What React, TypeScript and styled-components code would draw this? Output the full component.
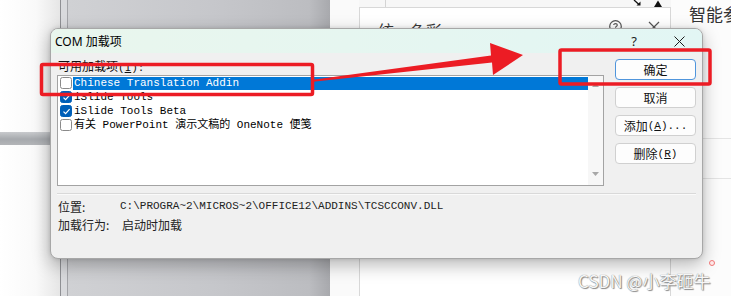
import React from 'react';
import styled, { createGlobalStyle } from 'styled-components';

const MONO = `"Liberation Mono", "Noto Sans CJK SC", monospace`;
const SANS = `"Noto Sans", "Noto Sans CJK SC", sans-serif`;
const CJK = `"Noto Sans CJK SC", "Noto Sans", sans-serif`;

const GlobalStyle = createGlobalStyle`
  html, body { margin: 0; padding: 0; background: #fff; }
  body { font-family: ${SANS}; }
`;

type Addin = { name: string; checked: boolean; selected?: boolean };

const addins: Addin[] = [
  { name: 'Chinese Translation Addin', checked: false, selected: true },
  { name: 'iSlide Tools', checked: true },
  { name: 'iSlide Tools Beta', checked: true },
  { name: '有关 PowerPoint 演示文稿的 OneNote 便笺', checked: false },
];

export default function App() {
  return (
    <>
      <GlobalStyle />
      <Screen>
        <LeftPane>
          <ShelfBar />
        </LeftPane>

        <SlidePane>
          <SlideInner />
        </SlidePane>

        <Workspace>
          <Gutter />
          <PaneColumn>
            <PaneToolbar>
              <ToolDivider />
              <svg width="30" height="7" viewBox="0 0 30 7">
                <path d="M1 0 L6 4.5" stroke="#111" strokeWidth="1.3" />
                <path d="M3.5 5.5 L7.5 5.5 L7.5 1.5 Z" fill="#111" />
                <path d="M21 7 L25 0.5 L29 7 Z" fill="#111" />
              </svg>
            </PaneToolbar>
            <TaskPane>
              <PaneHeader>
                <PaneTitle>统一色彩</PaneTitle>
                <PaneIcons>
                  <svg width="13" height="13" viewBox="0 0 13 13">
                    <circle cx="6.5" cy="6.5" r="5.8" fill="none" stroke="#555" strokeWidth="1.2" />
                    <path d="M4.7 5 C4.7 3.2 8.3 3.2 8.3 5 C8.3 6.3 6.5 6.3 6.5 7.7" fill="none" stroke="#555" strokeWidth="1.1" />
                    <circle cx="6.5" cy="9.5" r="0.7" fill="#555" />
                  </svg>
                  <svg width="12" height="12" viewBox="0 0 12 12">
                    <path d="M1 1 L11 11 M11 1 L1 11" stroke="#555" strokeWidth="1.2" />
                  </svg>
                </PaneIcons>
              </PaneHeader>
            </TaskPane>
          </PaneColumn>
          <SidePane>
            <SideTitle>智能参数</SideTitle>
            <SideRow $height={110} />
            <SideRow $height={39} />
          </SidePane>
        </Workspace>

        <Dialog>
          <TitleBar>
            <TitleText>COM 加载项</TitleText>
            <TitleButtons>
              <TitleButton $width={44}>
                <HelpMark>?</HelpMark>
              </TitleButton>
              <TitleButton $width={46}>
                <svg width="11" height="11" viewBox="0 0 11 11">
                  <path d="M0.5 0.5 L10.5 10.5 M10.5 0.5 L0.5 10.5" stroke="#1b1b1b" strokeWidth="1" />
                </svg>
              </TitleButton>
            </TitleButtons>
          </TitleBar>

          <Body>
            <ListColumn>
              <FieldLabel>
                可用加载项<Mono>(<u>I</u>):</Mono>
              </FieldLabel>
              <ListBox>
                <Rows>
                  {addins.map((a) => (
                    <Row key={a.name}>
                      <Check $checked={a.checked}>
                        {a.checked && (
                          <svg width="9" height="9" viewBox="0 0 9 9">
                            <path d="M1.5 4.6 L3.6 6.7 L7.6 2.2" fill="none" stroke="#fff" strokeWidth="1.2" />
                          </svg>
                        )}
                      </Check>
                      <RowText $selected={a.selected}>{a.name}</RowText>
                    </Row>
                  ))}
                </Rows>
                <ScrollTrack>
                  <svg width="7" height="4" viewBox="0 0 7 4">
                    <path d="M0 4 L3.5 0 L7 4 Z" fill="#a8a8a8" />
                  </svg>
                  <svg width="7" height="4" viewBox="0 0 7 4">
                    <path d="M0 0 L3.5 4 L7 0 Z" fill="#a8a8a8" />
                  </svg>
                </ScrollTrack>
              </ListBox>
            </ListColumn>

            <ButtonColumn>
              <DialogButton $primary>确定</DialogButton>
              <DialogButton>取消</DialogButton>
              <DialogButton>
                添加<Mono>(<u>A</u>)...</Mono>
              </DialogButton>
              <DialogButton>
                删除<Mono>(<u>R</u>)</Mono>
              </DialogButton>
            </ButtonColumn>

            <Separator />

            <InfoGrid>
              <InfoLabel>位置:</InfoLabel>
              <InfoPath>C:\PROGRA~2\MICROS~2\OFFICE12\ADDINS\TCSCCONV.DLL</InfoPath>
              <InfoLabel>加载行为:</InfoLabel>
              <InfoValue>启动时加载</InfoValue>
            </InfoGrid>
          </Body>
        </Dialog>

        <Annotations width="731" height="296" viewBox="0 0 731 296">
          <rect x="41.5" y="64.5" width="271" height="30" rx="1.5" fill="none" stroke="#ec1c24" strokeWidth="3.5" />
          <rect x="560" y="50" width="150" height="34" rx="1.5" fill="none" stroke="#ec1c24" strokeWidth="3.5" />
          <polygon
            points="313,79.8 491,55.6 490,43 523,55 493,75 492,62.4 313,81.8"
            fill="#ec1c24"
          />
        </Annotations>

        <Watermark>CSDN @小李砸牛</Watermark>
        <NoticeDot />
      </Screen>
    </>
  );
}

const Screen = styled.div`
  position: relative;
  width: 731px;
  height: 296px;
  overflow: hidden;
  display: grid;
  grid-template-columns: 60px 270px 1fr;
  background: #fff;
`;

const LeftPane = styled.div`
  padding-top: 132px;
  background: linear-gradient(90deg, #ffffff 0%, #f9f9f9 60%, #e6e6e6 100%);
`;

const ShelfBar = styled.div`
  height: 13px;
  background: linear-gradient(180deg, #c8cacd 0%, #a6a9ad 55%, #b3b5b8 100%);
`;

const SlidePane = styled.div`
  display: flex;
  padding-left: 6px;
  border-left: 1px solid #8f9094;
  background: #d9dadd;
`;

const SlideInner = styled.div`
  flex: 1;
  border-left: 1px solid #a3a4a8;
  background: linear-gradient(90deg, #d0d1d4 0%, #c6c7cb 55%, #bcbdc1 92%, #a8a9ad 100%);
`;

const Workspace = styled.div`
  display: grid;
  grid-template-columns: 29px 312px 1fr;
  background: #f7f7f7;
  overflow: hidden;
`;

const Gutter = styled.div`
  background: #fafafa;
`;

const PaneColumn = styled.div`
  display: flex;
  flex-direction: column;
`;

const PaneToolbar = styled.div`
  height: 7px;
  display: flex;
  align-items: flex-start;
  justify-content: space-between;
  padding: 0 8px 0 26px;
  overflow: hidden;
`;

const ToolDivider = styled.div`
  width: 1px;
  height: 7px;
  background: #d4d4d4;
`;

const TaskPane = styled.div`
  flex: 1;
  border-left: 1px solid #d8d8d8;
  border-top: 1px solid #d8d8d8;
  border-right: 1px solid #d8d8d8;
  background: #fff;
`;

const PaneHeader = styled.div`
  display: flex;
  align-items: flex-start;
  justify-content: space-between;
  padding: 11px 10px 0 18px;
`;

const PaneTitle = styled.div`
  font-family: ${CJK};
  font-size: 16px;
  line-height: 22px;
  color: #3a3a3a;
`;

const PaneIcons = styled.div`
  display: flex;
  align-items: center;
  gap: 26px;
  padding-top: 1px;
`;

const SidePane = styled.div`
  background: #fcfcfc;
  display: flex;
  flex-direction: column;
  overflow: hidden;
`;

const SideTitle = styled.div`
  height: 28px;
  padding: 1px 0 0 18px;
  box-sizing: border-box;
  font-family: ${CJK};
  font-size: 17px;
  color: #333;
  white-space: nowrap;
`;

const SideRow = styled.div<{ $height: number }>`
  height: ${(p) => p.$height}px;
  border-bottom: 1px solid #e4e4e4;
`;

const Dialog = styled.div`
  position: absolute;
  left: 50px;
  top: 28px;
  width: 653px;
  height: 231px;
  box-sizing: border-box;
  border: 1px solid #a7a7a7;
  border-radius: 8px;
  background: #f0f0f0;
  box-shadow: 0 6px 18px rgba(0, 0, 0, 0.28), 0 0 4px rgba(0, 0, 0, 0.12);
  overflow: hidden;
  display: flex;
  flex-direction: column;
`;

const TitleBar = styled.div`
  height: 24px;
  display: flex;
  align-items: center;
  justify-content: space-between;
  padding-left: 4px;
  background: linear-gradient(90deg, #e9f6ed 0%, #e5f6f1 60%, #e2f6f4 100%);
`;

const TitleText = styled.div`
  font-family: ${SANS};
  font-size: 12px;
  color: #000;
`;

const TitleButtons = styled.div`
  display: flex;
  height: 100%;
`;

const TitleButton = styled.div<{ $width: number }>`
  width: ${(p) => p.$width}px;
  display: flex;
  align-items: center;
  justify-content: center;
`;

const HelpMark = styled.span`
  font-family: ${SANS};
  font-size: 13px;
  color: #1b1b1b;
`;

const Body = styled.div`
  display: grid;
  grid-template-columns: 547px 81px;
  column-gap: 11px;
  padding: 6px 6px 0 6px;
`;

const ListColumn = styled.div`
  display: flex;
  flex-direction: column;
`;

const FieldLabel = styled.div`
  height: 16px;
  line-height: 14px;
  font-family: ${CJK};
  font-size: 12px;
  color: #111;
  padding-left: 1px;
`;

const Mono = styled.span`
  font-family: ${MONO};
  font-size: 11px;
`;

const ListBox = styled.div`
  height: 111px;
  box-sizing: border-box;
  border: 1px solid #a3a3a3;
  background: #fff;
  display: flex;
`;

const Rows = styled.div`
  flex: 1;
  padding-left: 2px;
`;

const Row = styled.div`
  height: 14px;
  display: flex;
  align-items: center;
`;

const Check = styled.div<{ $checked: boolean }>`
  width: 12px;
  height: 12px;
  box-sizing: border-box;
  border-radius: 2.5px;
  border: 1px solid ${(p) => (p.$checked ? '#005fb8' : '#8a8a8a')};
  background: ${(p) => (p.$checked ? '#005fb8' : '#fff')};
  display: flex;
  align-items: center;
  justify-content: center;
  margin-right: 1px;
`;

const RowText = styled.div<{ $selected?: boolean }>`
  flex: 1;
  height: 13px;
  line-height: 13px;
  padding-left: 1px;
  font-family: ${MONO};
  font-size: 11px;
  white-space: nowrap;
  color: ${(p) => (p.$selected ? '#fff' : '#000')};
  background: ${(p) => (p.$selected ? '#0078d7' : 'transparent')};
`;

const ScrollTrack = styled.div`
  width: 15px;
  background: #f7f7f7;
  display: flex;
  flex-direction: column;
  align-items: center;
  justify-content: space-between;
  padding: 7px 0 9px;
`;

const ButtonColumn = styled.div`
  display: flex;
  flex-direction: column;
  gap: 7px;
`;

const DialogButton = styled.div<{ $primary?: boolean }>`
  height: 21px;
  box-sizing: border-box;
  border: 1px solid ${(p) => (p.$primary ? '#4f95dc' : '#d0d0d0')};
  border-radius: 4px;
  background: #fdfdfd;
  display: flex;
  align-items: center;
  justify-content: center;
  font-family: ${CJK};
  font-size: 12px;
  color: #111;
`;

const Separator = styled.div`
  grid-column: 1 / -1;
  margin-top: 7px;
  border-top: 1px solid #d9d9d9;
  border-bottom: 1px solid #fafafa;
`;

const InfoGrid = styled.div`
  grid-column: 1 / -1;
  display: grid;
  grid-template-columns: 62px 1fr;
  grid-auto-rows: 18px;
  align-items: center;
  margin-top: 2px;
  padding-left: 1px;
`;

const InfoLabel = styled.div`
  font-family: ${CJK};
  font-size: 12px;
  color: #222;
`;

const InfoPath = styled.div`
  font-family: ${MONO};
  font-size: 11px;
  color: #222;
`;

const InfoValue = styled.div`
  font-family: ${CJK};
  font-size: 12px;
  color: #222;
  padding-left: 2px;
`;

const Annotations = styled.svg`
  position: absolute;
  left: 0;
  top: 0;
  pointer-events: none;
`;

const Watermark = styled.div`
  position: absolute;
  left: 578px;
  top: 268px;
  font-family: ${CJK};
  font-size: 17px;
  color: #f6f6f6;
  text-shadow: 0 0 1px #6a6a6a, 1px 1px 1px #8a8a8a;
  white-space: nowrap;
`;

const NoticeDot = styled.div`
  position: absolute;
  left: 709px;
  top: 260px;
  width: 6px;
  height: 6px;
  box-sizing: border-box;
  border: 1.5px solid #ef7676;
  border-radius: 50%;
  background: #fde8e8;
`;
